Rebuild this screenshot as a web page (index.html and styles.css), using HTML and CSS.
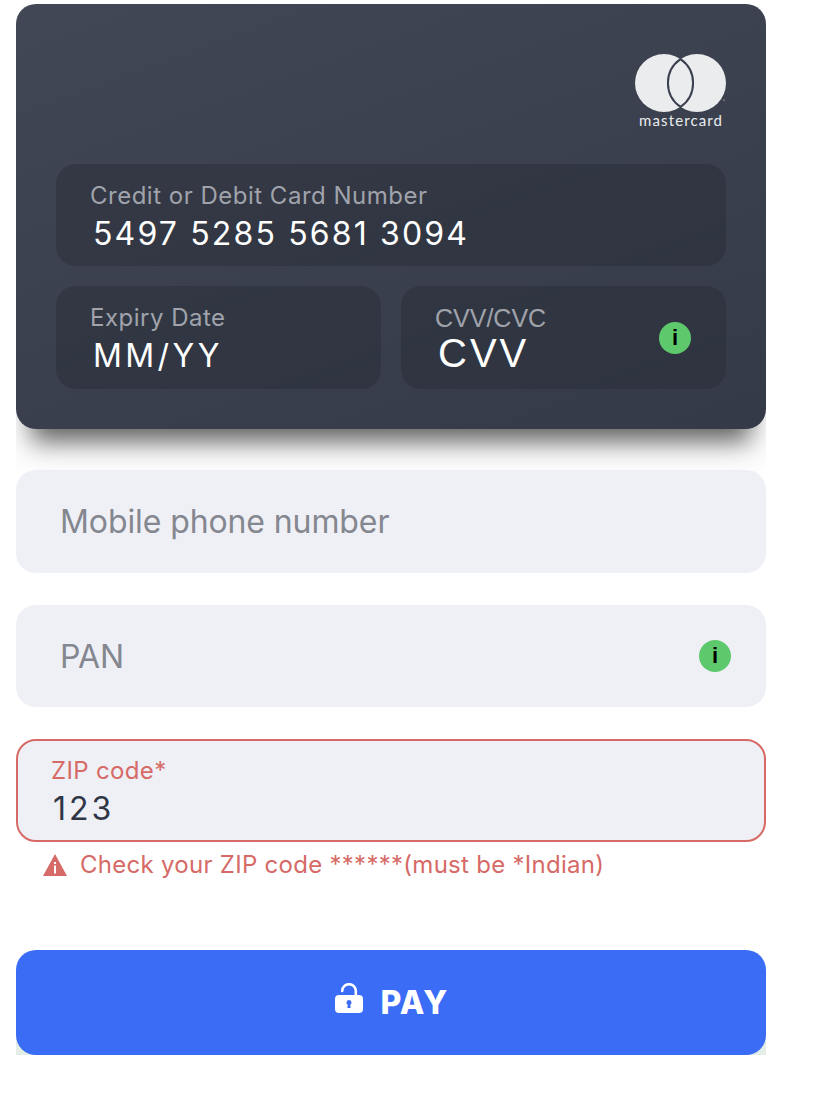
FILE: index.html
```html
<!DOCTYPE html>
<html lang="en">
<head>
<meta charset="utf-8">
<title>Payment</title>
<link rel="stylesheet" href="styles.css">
</head>
<body>
<main class="checkout">
  <section class="card">
    <div class="brand">
      <svg class="brand-mark" width="91" height="58" viewBox="0 0 91 58" aria-hidden="true">
        <circle cx="29" cy="29" r="29" fill="#ebecee"/>
        <circle cx="62" cy="29" r="29" fill="#ebecee"/>
        <path d="M45.5 5.1A29 29 0 0 1 45.5 52.9A29 29 0 0 1 45.5 5.1Z" fill="#ebecee" stroke="#3a404e" stroke-width="2"/>
        <circle cx="89" cy="46" r=".6" fill="#ebecee"/>
      </svg>
      <span class="brand-name">mastercard</span>
    </div>
    <div class="card-field">
      <span class="card-label">Credit or Debit Card Number</span>
      <span class="card-value">5497 5285 5681 3094</span>
    </div>
    <div class="card-row">
      <div class="card-field tall">
        <span class="card-label">Expiry Date</span>
        <span class="card-value spaced">MM/YY</span>
      </div>
      <div class="card-field tall cvv">
        <div class="cvv-text">
          <span class="card-label helv">CVV/CVC</span>
          <span class="card-value helv-value">CVV</span>
        </div>
        <span class="info">i</span>
      </div>
    </div>
  </section>

  <div class="input">Mobile phone number</div>
  <div class="input with-info">PAN <span class="info">i</span></div>

  <div class="input-error">
    <span class="error-label">ZIP code*</span>
    <span class="error-value">123</span>
  </div>
  <p class="error-msg">
    <svg width="24" height="22" viewBox="0 0 24 22" aria-hidden="true">
      <path d="M12 0L24 22H0Z" fill="#d66a66"/>
      <rect x="11" y="11.5" width="2" height="8" fill="#fff"/>
      <rect x="11" y="8" width="2" height="2" fill="#fff"/>
    </svg>
    <span>Check your ZIP code ******(must be *Indian)</span>
  </p>

  <div class="pay-wrap">
    <button class="pay" type="button">
      <svg class="lock" width="28" height="30" viewBox="0 0 28 30" aria-hidden="true">
        <path d="M7.2 8V8A6.8 6.8 0 0 1 20.8 8V12" fill="none" stroke="#fff" stroke-width="2.6" stroke-linecap="round"/>
        <path fill-rule="evenodd" fill="#fff" d="M4 12H24A4 4 0 0 1 28 16V26A4 4 0 0 1 24 30H4A4 4 0 0 1 0 26V16A4 4 0 0 1 4 12ZM14 17A2.6 2.6 0 0 0 12.7 21.8L12.4 25H15.6L15.3 21.8A2.6 2.6 0 0 0 14 17Z"/>
      </svg>
      <span>PAY</span>
    </button>
  </div>
</main>
</body>
</html>
```

FILE: styles.css
```css
* { box-sizing: border-box; }

html, body { margin: 0; background: #fff; }

body {
  font-family: Inter, "Liberation Sans", sans-serif;
  color: #2f3645;
}

.checkout {
  width: 750px;
  margin: 4px 0 0 16px;
  display: flex;
  flex-direction: column;
  overflow: hidden;
}

.card {
  height: 425px;
  border-radius: 20px;
  padding: 50px 40px 40px;
  background: linear-gradient(160deg, #414755 0%, #343a48 100%);
  box-shadow: 0 28px 24px -16px rgba(0, 0, 0, .6), 0 30px 40px rgba(0, 0, 0, .05);
  display: flex;
  flex-direction: column;
  flex-shrink: 0;
  position: relative;
}

.brand {
  height: 110px;
  display: flex;
  flex-direction: column;
  align-items: flex-end;
}

.brand-mark { display: block; }

.brand-name {
  margin: -1px 3px 0 0;
  font: 400 15px/18px Lato, sans-serif;
  letter-spacing: 1.1px;
  color: #ebecee;
}

.card-field {
  height: 102px;
  border-radius: 20px;
  padding: 16px 34px 0;
  background: rgba(40, 44, 54, .45);
  display: flex;
  flex-direction: column;
}

.card-field.tall { height: 103px; }

.card-row {
  margin-top: 20px;
  display: grid;
  grid-template-columns: 325px 325px;
  gap: 20px;
}

.card-label {
  font-size: 24px;
  line-height: 32px;
  letter-spacing: .5px;
  color: #a0a3ab;
}

.card-value {
  margin: 3px 0 0 3px;
  font-size: 32px;
  line-height: 38px;
  letter-spacing: 2.15px;
  color: #fff;
}

.card-value.spaced { letter-spacing: 3.4px; }

.helv {
  font-family: "Liberation Sans", sans-serif;
  font-size: 25px;
  line-height: 30px;
  letter-spacing: 0;
}

.card-field.cvv {
  flex-direction: row;
  align-items: center;
  justify-content: space-between;
  padding: 1px 35px 0 34px;
}

.cvv-text {
  display: flex;
  flex-direction: column;
}

.helv-value {
  margin-top: 0;
  font: 400 40px/40px "Liberation Sans", sans-serif;
  letter-spacing: 3px;
}

.info {
  width: 32px;
  height: 32px;
  border-radius: 50%;
  background: #5ec96c;
  color: #000;
  font: 700 22px/32px "Liberation Sans", sans-serif;
  letter-spacing: 0;
  text-align: center;
  flex-shrink: 0;
}

.input {
  height: 103px;
  margin-top: 41px;
  padding: 0 35px 0 44px;
  border-radius: 20px;
  background: #eff0f6;
  color: #84878f;
  font-size: 32px;
  letter-spacing: -.1px;
  display: flex;
  align-items: center;
  flex-shrink: 0;
  position: relative;
}

.with-info {
  height: 102px;
  margin-top: 32px;
  justify-content: space-between;
}

.input-error {
  height: 103px;
  margin-top: 32px;
  padding: 16px 33px 0;
  border: 2px solid #d66a66;
  border-radius: 20px;
  background: #eff0f6;
  display: flex;
  flex-direction: column;
  flex-shrink: 0;
}

.error-label {
  font-size: 24px;
  line-height: 28px;
  letter-spacing: .35px;
  color: #d66a66;
}

.error-value {
  margin: 5px 0 0 2px;
  font-size: 32px;
  line-height: 38px;
  letter-spacing: 3px;
  color: #2f3645;
}

.error-msg {
  margin: 10px 0 0 27px;
  display: flex;
  align-items: center;
  gap: 13px;
  font-size: 24px;
  line-height: 26px;
  letter-spacing: .28px;
  color: #d66a66;
}

.pay-wrap {
  margin-top: 72px;
  background: linear-gradient(to bottom, #fff 50%, #e3efe6 50%);
}

.pay {
  width: 100%;
  height: 105px;
  padding: 0 0 0 2px;
  border: 0;
  border-radius: 20px;
  background: #3b6cf6;
  color: #fff;
  font: 800 32px/1 Inter, sans-serif;
  letter-spacing: 1.3px;
  display: flex;
  align-items: center;
  justify-content: center;
  gap: 17px;
}

.lock { margin-bottom: 9px; }
```
